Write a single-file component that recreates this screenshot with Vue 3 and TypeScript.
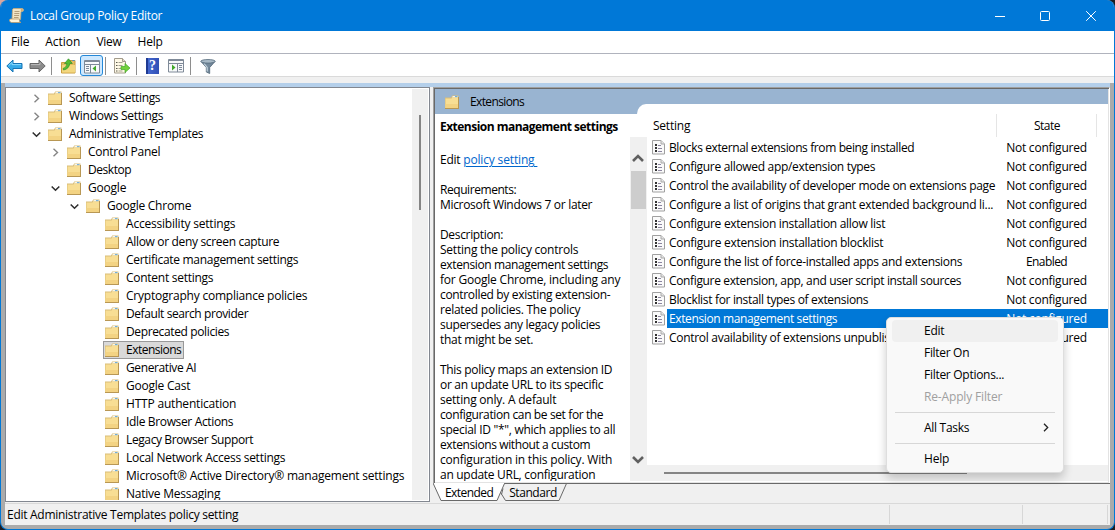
<script setup lang="ts">
import type { Directive } from 'vue'

interface TreeNode { label: string; depth: number; width: number; open?: boolean; closed?: boolean; selected?: boolean }
interface Setting { label: string; width: number; enabled?: boolean; selected?: boolean }
interface Line { text: string; width: number }

// Adjusts tracking so a label occupies its design width in any fallback font.
const vFit: Directive<HTMLElement, number> = {
  mounted(el, binding) {
    const natural = el.getBoundingClientRect().width
    const count = (el.textContent ?? '').length
    if (count > 0) el.style.letterSpacing = `${(binding.value - 0.8 - natural) / count}px`
  },
}

const menus: Line[] = [
  { text: 'File', width: 19 }, { text: 'Action', width: 36 }, { text: 'View', width: 26 }, { text: 'Help', width: 26 },
]

const tree: TreeNode[] = [
  { label: 'Software Settings', depth: 0, width: 92, closed: true },
  { label: 'Windows Settings', depth: 0, width: 95, closed: true },
  { label: 'Administrative Templates', depth: 0, width: 135, open: true },
  { label: 'Control Panel', depth: 1, width: 73, closed: true },
  { label: 'Desktop', depth: 1, width: 44 },
  { label: 'Google', depth: 1, width: 39, open: true },
  { label: 'Google Chrome', depth: 2, width: 85, open: true },
  { label: 'Accessibility settings', depth: 3, width: 110 },
  { label: 'Allow or deny screen capture', depth: 3, width: 154 },
  { label: 'Certificate management settings', depth: 3, width: 173 },
  { label: 'Content settings', depth: 3, width: 88 },
  { label: 'Cryptography compliance policies', depth: 3, width: 182 },
  { label: 'Default search provider', depth: 3, width: 123 },
  { label: 'Deprecated policies', depth: 3, width: 104 },
  { label: 'Extensions', depth: 3, width: 56, selected: true },
  { label: 'Generative AI', depth: 3, width: 71 },
  { label: 'Google Cast', depth: 3, width: 65 },
  { label: 'HTTP authentication', depth: 3, width: 111 },
  { label: 'Idle Browser Actions', depth: 3, width: 108 },
  { label: 'Legacy Browser Support', depth: 3, width: 128 },
  { label: 'Local Network Access settings', depth: 3, width: 160 },
  { label: 'Microsoft® Active Directory® management settings', depth: 3, width: 279 },
  { label: 'Native Messaging', depth: 3, width: 95 },
]

const description: Line[] = [
  { text: 'Requirements:', width: 77 },
  { text: 'Microsoft Windows 7 or later', width: 153 },
  { text: '', width: 0 },
  { text: 'Description:', width: 64 },
  { text: 'Setting the policy controls', width: 139 },
  { text: 'extension management settings', width: 169 },
  { text: 'for Google Chrome, including any', width: 181 },
  { text: 'controlled by existing extension-', width: 171 },
  { text: 'related policies. The policy', width: 141 },
  { text: 'supersedes any legacy policies', width: 161 },
  { text: 'that might be set.', width: 94 },
  { text: '', width: 0 },
  { text: 'This policy maps an extension ID', width: 173 },
  { text: 'or an update URL to its specific', width: 164 },
  { text: 'setting only. A default', width: 117 },
  { text: 'configuration can be set for the', width: 164 },
  { text: 'special ID "*", which applies to all', width: 176 },
  { text: 'extensions without a custom', width: 151 },
  { text: 'configuration in this policy. With', width: 173 },
  { text: 'an update URL, configuration', width: 156 },
]

const settings: Setting[] = [
  { label: 'Blocks external extensions from being installed', width: 246 },
  { label: 'Configure allowed app/extension types', width: 207 },
  { label: 'Control the availability of developer mode on extensions page', width: 327 },
  { label: 'Configure a list of origins that grant extended background li...', width: 325 },
  { label: 'Configure extension installation allow list', width: 217 },
  { label: 'Configure extension installation blocklist', width: 215 },
  { label: 'Configure the list of force-installed apps and extensions', width: 294, enabled: true },
  { label: 'Configure extension, app, and user script install sources', width: 293 },
  { label: 'Blocklist for install types of extensions', width: 200 },
  { label: 'Extension management settings', width: 169, selected: true },
  { label: 'Control availability of extensions unpublished', width: 242 },
]
</script>

<template>
  <div class="desktop">
    <div class="window">
      <header class="titlebar">
        <svg class="app-icon" width="15" height="15" viewBox="0 0 15 15">
          <path d="M3.500 1.500Q4 .5 5 .5h8q1.500 0 1.500 1.500T13 3.500h-1l-.5 8H3z" fill="#f1e4c4" stroke="#c9a978" stroke-width=".8" />
          <path d="M1.500 11h9q-.5 3.500 1.500 3.500H2.500Q.5 14 .5 12.500T1.500 11z" fill="#fff3d8" stroke="#b99a6b" stroke-width=".8" />
          <path d="M5.500 3.500h5M5.300 5.500h5M5.100 7.500h5M5 9.500h4.500" stroke="#a58d69" stroke-width=".8" />
          <path d="M11.800 1h2v2h-2z" fill="#d6ad72" />
        </svg>
        <span class="t title" v-fit="133">Local Group Policy Editor</span>
        <svg class="caption" width="102" height="12" viewBox="0 0 102 12" fill="none" stroke="#fff">
          <path d="M0 6.500h10" />
          <rect x="45.500" y="1.500" width="9" height="9" rx="1" />
          <path d="M91.200 1.200l9.600 9.600M100.800 1.200l-9.600 9.600" />
        </svg>
      </header>

      <nav class="menubar">
        <span v-for="m in menus" :key="m.text" class="t" v-fit="m.width">{{ m.text }}</span>
      </nav>

      <div class="toolbar">
        <svg class="tool back" width="17" height="14" viewBox="0 0 17 14">
          <path d="M.8 7L7 1v3.500h9v5H7V13z" fill="#35a9e8" stroke="#1774b5" />
          <path d="M2.500 6.800L6 3.400v2.200h9" fill="none" stroke="#8bdbff" />
        </svg>
        <svg class="tool forward" width="17" height="14" viewBox="0 0 17 14">
          <path d="M16.200 7L10 1v3.500H1v5h9V13z" fill="#8b8b8b" stroke="#686868" />
          <path d="M2 5.600h9V3.500" fill="none" stroke="#bbb" />
        </svg>
        <i class="sep s1" />
        <svg class="tool up" width="15" height="16" viewBox="0 0 15 16">
          <path d="M.5 4.500h6l1.500-2h6v12.500H.5z" fill="#e3bd60" stroke="#c99d3e" />
          <path d="M1 7h13v7.500H1z" fill="#f3d77f" />
          <path d="M11.500 2.500h2" stroke="#4b8fd0" />
          <path d="M2 10.500Q5.500 10 6 5.500H3.500L7.500.8l3.800 4.700H8.800Q8 11 2.500 12z" fill="#55bd32" stroke="#31942a" stroke-width=".7" />
        </svg>
        <span class="pressed">
          <svg width="17" height="14" viewBox="0 0 17 14">
            <path d="M.5.5h15v12.500H.5z" fill="#f7f8fa" stroke="#7f8a98" />
            <path d="M1 1.500h14M1 4.500h14M6.500 4v9" stroke="#7f8a98" />
            <path d="M11 2.500h1M13 2.500h1" stroke="#fff" />
            <path d="M2 6.500h3M2 8.500h3M2 10.500h3" stroke="#7d8b9b" />
            <path d="M12 5.500v6L8.500 8.500z" fill="#40a829" />
          </svg>
        </span>
        <i class="sep s2" />
        <svg class="tool export" width="17" height="16" viewBox="0 0 17 16">
          <path d="M.5.5h8l3 3v11.500H.5z" fill="#fff9e6" stroke="#a29b8c" />
          <path d="M8.500.5v3h3" fill="#e5ddc7" stroke="#a29b8c" />
          <path d="M2 4.500h1.500M2 7.500h1.500M2 10.500h1.500M2 13h1.500" stroke="#59594f" />
          <path d="M4.500 4.500h4M4.500 7.500h4M4.500 10.500h3M4.500 13h4" stroke="#a7a292" />
          <path d="M7 8.500h4V5.500l5 4.500-5 4.500v-3H7z" fill="#74d13d" stroke="#43a92a" stroke-width=".7" />
        </svg>
        <i class="sep s3" />
        <span class="help-icon">?</span>
        <svg class="tool pane" width="17" height="14" viewBox="0 0 17 14">
          <path d="M.5.5h15v12.500H.5z" fill="#f7f8fa" stroke="#7f8a98" />
          <path d="M1 1.500h14M1 4.500h14M9.500 4v9" stroke="#7f8a98" />
          <path d="M11 2.500h1M13 2.500h1" stroke="#fff" />
          <path d="M11 6.500h3M11 8.500h3M11 10.500h3" stroke="#7d8b9b" />
          <path d="M4 5.500v6l3.500-3z" fill="#40a829" />
        </svg>
        <i class="sep s4" />
        <svg class="tool filter" width="16" height="15" viewBox="0 0 16 15">
          <path d="M1 2.500l5.300 6v4.500l3.400 1.500v-6l5.300-6z" fill="#74899b" stroke="#526778" stroke-width=".8" />
          <path d="M4 4.500l3.200 4v4" fill="none" stroke="#c6d5df" stroke-width="1.200" />
          <ellipse cx="8" cy="2.300" rx="7.200" ry="1.800" fill="#a9bac7" stroke="#576c7d" stroke-width=".8" />
        </svg>
      </div>
      <div class="rebar" />

      <main class="workspace">
        <section class="tree-pane">
          <div class="tree">
            <div v-for="n in tree" :key="n.label" class="node" :class="'depth-' + n.depth">
              <svg class="twist" width="9" height="9" viewBox="0 0 9 9" fill="none">
                <path v-if="n.closed" d="M2.500.8L6.500 4.500 2.500 8.200" stroke="#858585" stroke-width="1.400" />
                <path v-if="n.open" d="M.7 2.500L4.500 6.200 8.300 2.500" stroke="#303030" stroke-width="1.600" />
              </svg>
              <span class="node-body" :class="{ selected: n.selected }">
                <svg class="folder" width="14" height="14" viewBox="0 0 14 14">
                  <path d="M0 2.500h6L7.200.5h6.300V13H0z" fill="#d9bd78" />
                  <path d="M7.800 1h5v1.500H7z" fill="#f5f5ee" /><path d="M10 1.200h2.500v1H10z" fill="#4f9bd5" />
                  <path d="M.5 3.500h6l1-1h5.500v10.500H.5z" fill="#f8de94" />
                  <path d="M.5 9h12.500v4H.5z" fill="#f3d383" />
                  <path d="M0 13.500h14M13.500 2v11" stroke="#b89754" />
                </svg>
                <span class="t" v-fit="n.width">{{ n.label }}</span>
              </span>
            </div>
          </div>
          <div class="tree-scroll"><i class="tree-thumb" /></div>
        </section>

        <section class="result-pane">
          <div class="result-view">
            <div class="banner">
              <svg class="folder" width="14" height="14" viewBox="0 0 14 14">
                <path d="M0 2.500h6L7.200.5h6.300V13H0z" fill="#d9bd78" />
                <path d="M7.800 1h5v1.500H7z" fill="#f5f5ee" /><path d="M10 1.200h2.500v1H10z" fill="#4f9bd5" />
                <path d="M.5 3.500h6l1-1h5.500v10.500H.5z" fill="#f8de94" />
                <path d="M.5 9h12.500v4H.5z" fill="#f3d383" />
                <path d="M0 13.500h14M13.500 2v11" stroke="#b89754" />
              </svg>
              <span class="t" v-fit="55">Extensions</span>
            </div>
            <div class="columns">
              <article class="details">
                <h1 class="t" v-fit="178.5">Extension management settings</h1>
                <p class="edit"><span class="t" v-fit="21">Edit</span><a class="t" v-fit="75">policy setting&nbsp;</a></p>
                <div class="description">
                  <p v-for="(l, i) in description" :key="i"><span class="t" v-fit="l.width">{{ l.text }}</span></p>
                </div>
              </article>
              <div class="desc-scroll">
                <svg width="12" height="9" viewBox="0 0 12 9"><path d="M1 7l5-5 5 5" fill="none" stroke="#606060" stroke-width="2.600" /></svg>
                <i class="desc-thumb" />
                <svg class="down" width="12" height="9" viewBox="0 0 12 9"><path d="M1 2l5 5 5-5" fill="none" stroke="#606060" stroke-width="2.600" /></svg>
              </div>
              <div class="list">
                <div class="list-head">
                  <span class="h-setting"><span class="t" v-fit="38">Setting</span></span>
                  <span class="h-state"><span class="t" v-fit="27">State</span></span>
                </div>
                <div class="rows">
                  <div v-for="s in settings" :key="s.label" class="row" :class="{ active: s.selected }">
                    <svg class="doc" width="13" height="15" viewBox="0 0 13 15">
                      <path d="M.5.5h8.500l3.500 3.500v10H.5z" fill="#fafafa" stroke="#a0a0a0" />
                      <path d="M9 .5v3.500h3.500" fill="#e5e5e5" stroke="#a8a8a8" />
                      <path d="M3 4h2v2H3zM3 7h2v2H3zM3 10h2v2H3z" fill="#333" />
                      <path d="M6 5.500h3M6 8.500h4M6 11.500h4" stroke="#8c86a0" />
                    </svg>
                    <div class="cells">
                      <span class="name"><span class="t" v-fit="s.width">{{ s.label }}</span></span>
                      <span class="state"><span class="t" v-fit="s.enabled ? 42 : 81.5">{{ s.enabled ? 'Enabled' : 'Not configured' }}</span></span>
                    </div>
                  </div>
                </div>
                <div class="h-scroll"><i class="h-thumb" /></div>
              </div>
            </div>
          </div>
          <div class="tabs">
            <svg class="tab-shapes" width="136" height="20" viewBox="0 0 136 20">
              <path d="M0 0l8 17.500h56L71.500 0z" fill="#fff" />
              <path d="M0 0l8 17.500h56L71.500.5H136M67.500 9.500l5 8h53.500L133.500.5M70 5.500l-1.500 6" fill="none" stroke="#696969" />
            </svg>
            <span class="t tab-a" v-fit="49">Extended</span><span class="t tab-b" v-fit="48.500">Standard</span>
          </div>
        </section>
      </main>

      <footer class="status">
        <div class="status-text"><span class="t" v-fit="232">Edit Administrative Templates policy setting</span></div>
        <div class="cell-a" /><div class="cell-b" />
      </footer>
    </div>

    <div class="context-menu">
      <div class="item hover"><span class="t" v-fit="21">Edit</span></div>
      <div class="item"><span class="t" v-fit="46">Filter On</span></div>
      <div class="item"><span class="t" v-fit="81">Filter Options...</span></div>
      <div class="item disabled"><span class="t" v-fit="79">Re-Apply Filter</span></div>
      <hr />
      <div class="item"><span class="t" v-fit="46">All Tasks</span>
        <svg width="6" height="9" viewBox="0 0 6 9"><path d="M1 .8l3.700 3.700L1 8.200" fill="none" stroke="#222" stroke-width="1.300" /></svg>
      </div>
      <hr />
      <div class="item"><span class="t" v-fit="26">Help</span></div>
    </div>
  </div>
</template>

<style>
body { margin: 0; overflow: hidden; }
</style>

<style scoped>
* { box-sizing: border-box; }
.desktop { position: relative; width: 1115px; height: 530px; overflow: hidden; background: linear-gradient(90deg, #d8a7a0 0 20px, transparent 20px) 0 0 / 100% 20px no-repeat, #1c1c20; font: 12px/15px "Open Sans", "Noto Sans", sans-serif; color: #000; }
.t { display: inline-block; white-space: nowrap; flex: none; }
h1, p { margin: 0; }
svg { display: block; flex: none; }
.window { height: 530px; display: flex; flex-direction: column; border: solid #0078d7; border-width: 0 1px 1px; border-radius: 8px; overflow: hidden; background: #ababab; }
.titlebar { height: 31px; flex: none; display: flex; align-items: center; background: #0078d7; color: #fff; padding: 0 17px 0 8px; }
.app-icon { margin-right: 6px; }
.caption { margin-left: auto; }
.menubar { height: 23px; flex: none; display: flex; align-items: center; gap: 16px; padding: 0 0 1px 10px; background: #fff; border-bottom: 1px solid #b0b3bd; }
.toolbar { height: 23px; flex: none; display: flex; align-items: center; background: #fff; border-bottom: 1px solid #dadada; padding: 2px 0 0 5px; }
.forward { margin-left: 6px; }
.sep { width: 1px; height: 18px; background: #8e8e8e; }
.s1 { margin-left: 5px; }
.up { margin-left: 9px; }
.pressed { width: 23px; height: 21px; margin: -1px 0 0 4px; display: flex; align-items: center; justify-content: center; background: #cde8ff; border: 1px solid #2488d8; border-radius: 3px; padding: 2px 0 0 1px; }
.s2 { margin-left: 2px; }
.export { margin-left: 8px; }
.s3 { margin-left: 5px; }
.help-icon { width: 13px; height: 16px; margin-left: 9px; background: linear-gradient(90deg, #1e3a92 0 2px, #4467cf 2px, #3150b5); color: #fff; font: bold 14px/16px "Liberation Serif", serif; text-align: center; }
.pane { margin-left: 9px; }
.s4 { margin-left: 5px; }
.filter { margin-left: 9px; }
.rebar { height: 6px; flex: none; background: #f0f0f0; }

.workspace { height: 420px; flex: none; display: flex; margin: 0 4px; background: #f0f0f0; border-top: 4px solid #b4cfea; }
.tree-pane { width: 425px; height: 415px; border: 1px solid #828790; background: #fff; display: flex; padding: 1px 1px 1px 0; overflow: hidden; }
.tree { flex: 1; min-width: 0; overflow: hidden; }
.node { height: 18px; display: flex; align-items: center; }
.depth-0 { padding-left: 26px; }
.depth-1 { padding-left: 45px; }
.depth-2 { padding-left: 64px; }
.depth-3 { padding-left: 83px; }
.twist { margin-right: 5px; }
.node-body { height: 18px; display: flex; align-items: center; gap: 7px; padding: 0 2px 1px 1px; border: 1px solid transparent; }
.node-body.selected { background: #d9d9d9; border-color: #999; }
.tree-scroll { width: 16px; background: #f0f0f0; padding: 26px 0 0 7px; }
.tree-thumb { display: block; width: 2px; height: 95px; background: #858585; }

.result-pane { width: 677px; margin-left: 3px; display: flex; flex-direction: column; }
.result-view { height: 396px; border: 1px solid #a0a0a0; border-right-color: #fff; border-bottom: 0; display: flex; flex-direction: column; background: #fff; box-shadow: inset 1px 1px #696969, inset -1px -1px #e3e3e3; padding: 1px 1px 2px; }
.banner { height: 25px; flex: none; display: flex; align-items: center; gap: 11px; padding-left: 10px; background: #99b4d1; }
.columns { flex: 1; min-height: 0; display: flex; }
.details { width: 195px; flex: none; padding-left: 5px; height: 367px; overflow: hidden; }
h1 { font-size: 12px; line-height: 15px; font-weight: 700; margin-top: 5px; }
.edit { display: flex; gap: 3px; margin-top: 18px; height: 15px; }
.edit a { color: #0066cc; text-decoration: underline; text-underline-offset: 2px; }
.description { margin-top: 15px; }
.description p { height: 15px; }
.desc-scroll { width: 17px; flex: none; margin-top: 23px; height: 344px; background: #f0f0f0; display: flex; flex-direction: column; align-items: center; padding: 17px 1px 17px 0; }
.desc-thumb { width: 15px; height: 38px; background: #cdcdcd; margin: 8px 0 0 1px; }
.down { margin-top: auto; }
.list { flex: 1; min-width: 0; margin-top: -10px; display: flex; flex-direction: column; }
.list-head { height: 33px; flex: none; display: flex; margin-left: -10px; padding: 10px 0 0 16px; background: #fff; border-top-left-radius: 9px 10px; }
.list-head > span { height: 23px; padding-top: 4px; }
.h-setting { width: 344px; border-right: 1px solid #e5e5e5; }
.h-state { width: 100px; text-align: center; padding-left: 1px; border-right: 1px solid #e5e5e5; }
.rows { flex: 1; padding: 1px 0 0 5px; }
.row { height: 19px; display: flex; align-items: center; }
.cells { height: 19px; flex: 1; display: flex; align-items: center; margin-left: 2px; padding-left: 2px; }
.name { width: 327px; height: 15px; display: flex; }
.state { width: 101px; text-align: center; }
.active .cells { background: #0078d7; color: #fff; }
.h-scroll { height: 16px; flex: none; background: #f0f0f0; padding: 7px 0 0 17px; }
.h-thumb { display: block; width: 303px; height: 2px; background: #858585; }
.tabs { height: 20px; position: relative; display: flex; gap: 16px; padding: 1px 0 0 12px; border-top: 1px solid #696969; }
.tab-shapes { position: absolute; left: 0; top: -1px; }
.tab-a, .tab-b { position: relative; }

.status { height: 22px; flex: none; margin: 0 4px; background: #f0f0f0; border-top: 1px solid #d9d9d9; display: flex; padding: 1px 0; }
.status-text { width: 885px; padding: 2px 0 0 2px; border-right: 1px solid #d7d7d7; }
.cell-a { width: 133px; border-right: 1px solid #d7d7d7; }
.cell-b { width: 85px; border-right: 1px solid #d7d7d7; }

.context-menu { position: absolute; left: 886px; top: 317px; width: 178px; height: 156px; padding: 2px 5px; background: #f9f9f9; border: 1px solid #dedede; border-radius: 5px; box-shadow: 0 5px 10px #0003; }
.item { height: 22px; display: flex; align-items: center; padding: 0 9px 1px 32px; border-radius: 4px; }
.item svg { margin-left: auto; }
.hover { background: #f0f0f0; }
.disabled { color: #a0a0a0; }
hr { height: 1px; border: 0; margin: 4px 3px; background: #d7d7d7; }
</style>
